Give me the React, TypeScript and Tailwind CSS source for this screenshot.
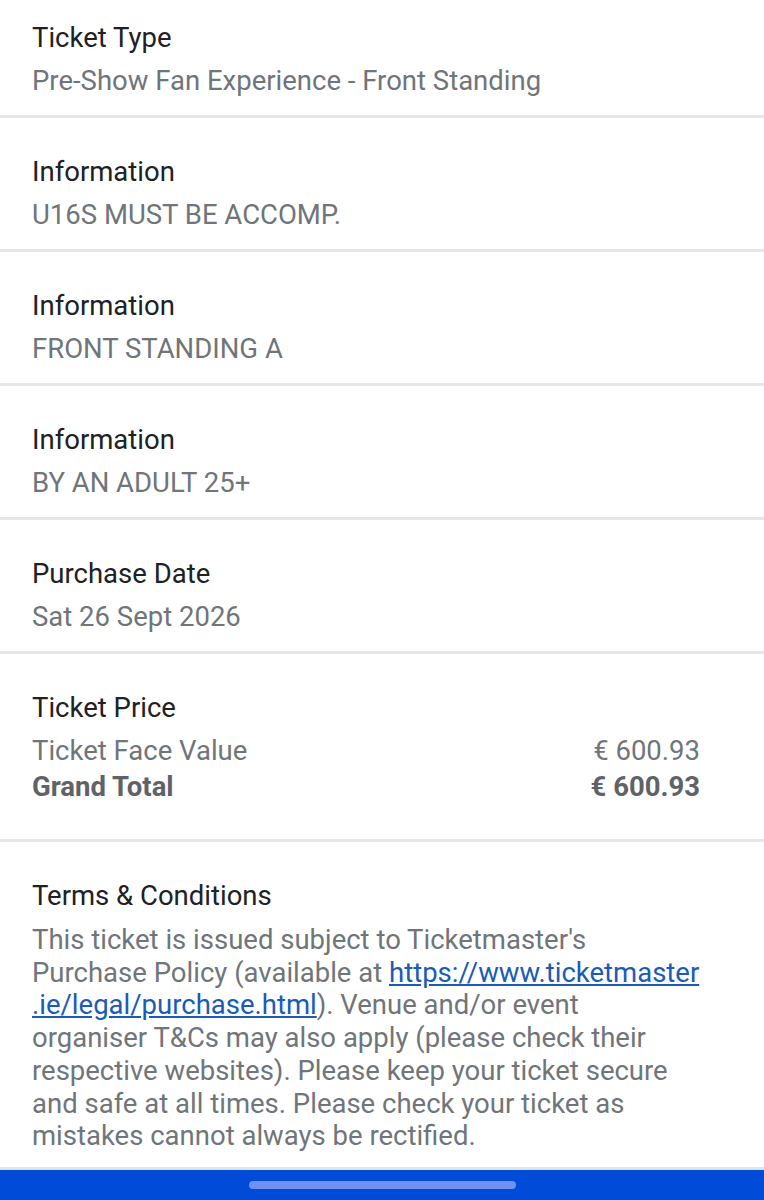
const rows = [
  { label: "Ticket Type", value: "Pre-Show Fan Experience - Front Standing" },
  { label: "Information", value: "U16S MUST BE ACCOMP." },
  { label: "Information", value: "FRONT STANDING A" },
  { label: "Information", value: "BY AN ADULT 25+" },
  { label: "Purchase Date", value: "Sat 26 Sept 2026" },
];

function Divider() {
  return <div className="h-[3px] bg-[#e6e6e6]" />;
}

export default function App() {
  return (
    <div className="h-[1200px] overflow-hidden bg-white flex flex-col font-['Roboto',sans-serif] text-[27.5px]">
      {rows.map((r, i) => (
        <div key={i}>
          <div className={`px-8 pb-4 ${i === 0 ? "pt-5" : "pt-9"}`}>
            <div className="leading-9 text-[#202124]">{r.label}</div>
            <div className="mt-[7px] leading-9 text-[#70757a]">{r.value}</div>
          </div>
          <Divider />
        </div>
      ))}

      <div className="pl-8 pr-16 pt-9 pb-[34px]">
        <div className="leading-9 text-[#202124]">Ticket Price</div>
        <div className="mt-[7px] flex justify-between leading-9 text-[#70757a]">
          <span>Ticket Face Value</span>
          <span>€ 600.93</span>
        </div>
        <div className="flex justify-between leading-9 font-bold text-[#5f6368]">
          <span>Grand Total</span>
          <span>€ 600.93</span>
        </div>
      </div>
      <Divider />

      <div className="flex-1 pl-8 pr-12 pt-9">
        <div className="leading-9 text-[#202124]">Terms &amp; Conditions</div>
        {/* wraps pinned to match the app's line breaks */}
        <p className="mt-[10px] leading-[32.7px] text-[#70757a] whitespace-nowrap">
          This ticket is issued subject to Ticketmaster's
          <br />
          Purchase Policy (available at{" "}
          <a href="#" className="text-[#1a5bb8] underline">
            https://www.ticketmaster
            <br />
            .ie/legal/purchase.html
          </a>
          ). Venue and/or event
          <br />
          organiser T&amp;Cs may also apply (please check their
          <br />
          respective websites). Please keep your ticket secure
          <br />
          and safe at all times. Please check your ticket as
          <br />
          mistakes cannot always be rectified.
        </p>
      </div>

      <div className="h-[3px] bg-[#dfe3ea]" />
      <div className="h-[30px] shrink-0 bg-[#004cd9] flex items-center justify-center">
        <div className="w-[267px] h-2 rounded-full bg-[#6d92f0]" />
      </div>
    </div>
  );
}
